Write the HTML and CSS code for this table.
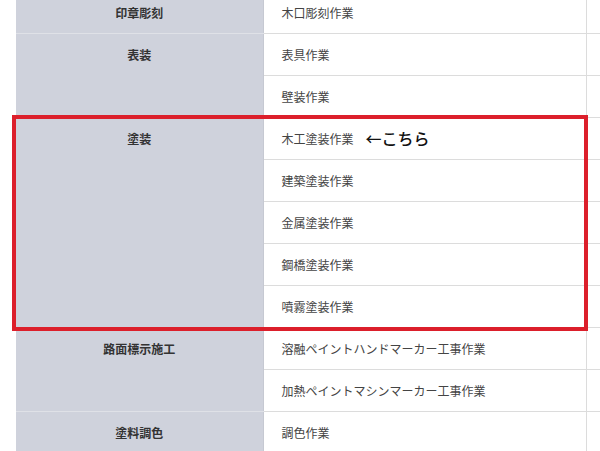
FILE: index.html
```html
<!DOCTYPE html>
<html lang="ja">
<head>
<meta charset="utf-8">
<link rel="stylesheet" href="styles.css">
</head>
<body>
<div class="wrap">
  <table class="jobs">
    <colgroup><col class="c1"><col class="c2"><col class="c3"></colgroup>
    <tbody>
      <tr><th>印章彫刻</th><td>木口彫刻作業</td><td class="x"></td></tr>
      <tr><th rowspan="2">表装</th><td>表具作業</td><td class="x"></td></tr>
      <tr><td>壁装作業</td><td class="x"></td></tr>
      <tr><th rowspan="5">塗装</th><td>木工塗装作業<span class="note">←こちら</span></td><td class="x"></td></tr>
      <tr><td>建築塗装作業</td><td class="x"></td></tr>
      <tr><td>金属塗装作業</td><td class="x"></td></tr>
      <tr><td>鋼橋塗装作業</td><td class="x"></td></tr>
      <tr><td>噴霧塗装作業</td><td class="x"></td></tr>
      <tr><th rowspan="2">路面標示施工</th><td>溶融ペイントハンドマーカー工事作業</td><td class="x"></td></tr>
      <tr><td>加熱ペイントマシンマーカー工事作業</td><td class="x"></td></tr>
      <tr><th>塗料調色</th><td>調色作業</td><td class="x"></td></tr>
    </tbody>
  </table>
  <div class="highlight"></div>
</div>
</body>
</html>
```
FILE: styles.css
```css
html, body {
  margin: 0;
  padding: 0;
  background: #fff;
  overflow: hidden;
}
body {
  font-family: "Noto Sans CJK JP", "Noto Sans", sans-serif;
}
.wrap {
  position: relative;
  margin: -8px 0 0 16px;
  width: 584px;
}
.jobs {
  border-collapse: collapse;
  table-layout: fixed;
  width: 584px;
}
.c1 { width: 247px; }
.c2 { width: 323px; }
.c3 { width: 14px; }
.jobs th {
  background: #cfd2dc;
  color: #333;
  font-size: 12px;
  font-weight: bold;
  line-height: 13px;
  text-align: center;
  vertical-align: top;
  padding: 14px 8px;
  border-bottom: 1px solid #dfe1e7;
  border-right: 1px solid #c6c9d2;
}
.jobs td {
  color: #444;
  font-size: 12px;
  line-height: 13px;
  padding: 14px 18px;
  border-bottom: 1px solid #dcdcdc;
  border-right: 1px solid #dcdcdc;
  white-space: nowrap;
}
.jobs td.x {
  padding: 0;
  border-right: none;
}
.note {
  display: inline-block;
  margin-left: 12px;
  font-size: 16px;
  font-weight: 500;
  color: #111;
  line-height: 13px;
  vertical-align: top;
}
.highlight {
  position: absolute;
  left: -4px;
  top: 123px;
  width: 576px;
  height: 216px;
  box-sizing: border-box;
  border: 4px solid #dc1f2b;
  pointer-events: none;
}
```
